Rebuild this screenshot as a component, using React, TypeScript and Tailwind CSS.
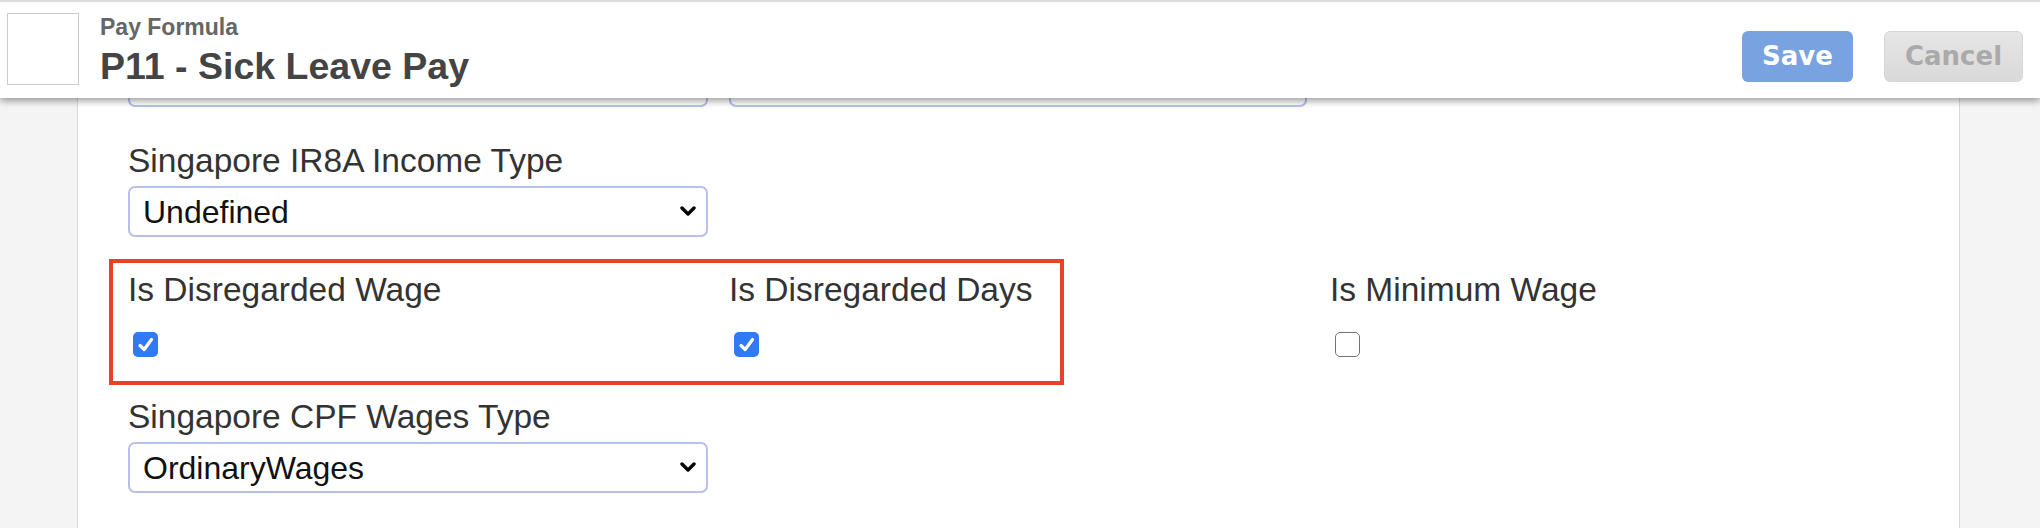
import React from "react";

function Chevron() {
  return (
    <svg width="16" height="11" viewBox="0 0 16 11" className="shrink-0">
      <polyline points="2,2 8,8 14,2" fill="none" stroke="#000" strokeWidth="3.4" strokeLinecap="round" strokeLinejoin="round" />
    </svg>
  );
}

function Select({ value, width = "w-[580px]" }: { value: string; width?: string }) {
  return (
    <div className={`${width} h-[51px] flex items-center justify-between pl-[13px] pr-[10px] border-2 border-[#b8bfec] rounded-[7px] bg-white text-[32px] leading-none text-[#111]`}>
      <span>{value}</span>
      <Chevron />
    </div>
  );
}

function Checkbox({ checked }: { checked: boolean }) {
  if (checked) {
    return (
      <span className="ml-[5px] w-[25px] h-[25px] rounded-[5px] bg-[#3179f5] flex items-center justify-center">
        <svg width="18" height="18" viewBox="0 0 18 18">
          <polyline points="3,9.5 7.2,13.5 14.5,3.5" fill="none" stroke="#fff" strokeWidth="3.2" strokeLinecap="round" strokeLinejoin="round" />
        </svg>
      </span>
    );
  }
  return <span className="ml-[5px] w-[25px] h-[25px] rounded-[5px] border-[1.5px] border-[#737373] bg-white block" />;
}

function Label({ children }: { children: React.ReactNode }) {
  return <div className="text-[33.5px] leading-[40px] text-[#333] whitespace-nowrap">{children}</div>;
}

export default function App() {
  return (
    <div className="relative h-[528px] w-full overflow-hidden flex bg-white font-['Liberation_Sans',Arial,sans-serif]">
      <aside className="w-[78px] shrink-0 bg-[#f4f4f4] border-r border-[#d9d9d9]" />
      <main className="flex-1 bg-white pl-[50px] pt-[56px]">
        <div className="grid grid-cols-[580px_580px_580px] gap-x-[21px]">
          <Select value="" />
          <Select value="" width="w-[578px]" />
        </div>

        <div className="mt-[34px]">
          <Label>Singapore IR8A Income Type</Label>
          <div className="mt-[5px]">
            <Select value="Undefined" />
          </div>
        </div>

        <div className="mt-[33px] grid grid-cols-[580px_580px_580px] gap-x-[21px]">
          <div>
            <Label>Is Disregarded Wage</Label>
            <div className="mt-[22px]">
              <Checkbox checked />
            </div>
          </div>
          <div>
            <Label>Is Disregarded Days</Label>
            <div className="mt-[22px]">
              <Checkbox checked />
            </div>
          </div>
          <div>
            <Label>Is Minimum Wage</Label>
            <div className="mt-[22px]">
              <Checkbox checked={false} />
            </div>
          </div>
        </div>

        <div className="mt-[40px]">
          <Label>Singapore CPF Wages Type</Label>
          <div className="mt-[5px]">
            <Select value="OrdinaryWages" />
          </div>
        </div>
      </main>
      <aside className="w-[81px] shrink-0 bg-[#f4f4f4] border-l border-[#d9d9d9]" />

      {/* annotation box */}
      <div className="absolute left-[109px] top-[259px] w-[955px] h-[126px] border-[4px] border-[#e9402b] pointer-events-none" />

      {/* sticky header */}
      <header className="absolute top-0 inset-x-0 h-[98px] bg-white border-t-2 border-[#dcdcdc] shadow-[0_3px_7px_rgba(0,0,0,0.38)] flex items-start pl-[7px] pt-[11px] pr-[17px]">
        <div className="w-[72px] h-[72px] border border-[#cccccc] bg-white shrink-0" />
        <div className="ml-[21px] mt-[1px] flex flex-col">
          <div className="text-[23px] leading-[26px] font-bold text-[#666]">Pay Formula</div>
          <div className="mt-[5px] text-[37.5px] leading-[42px] font-bold text-[#444]">P11 - Sick Leave Pay</div>
        </div>
        <div className="ml-auto mt-[18px] flex gap-[31px] font-['DejaVu_Sans',Verdana,sans-serif] font-bold text-[26px]">
          <button className="w-[111px] h-[51px] rounded-[6px] bg-[#79a3e0] text-white flex items-center justify-center">Save</button>
          <button className="w-[139px] h-[51px] rounded-[6px] border border-[#d6d6d6] bg-gradient-to-b from-[#e6e6e6] to-[#d9d9d9] text-[#aaaaaa] flex items-center justify-center">Cancel</button>
        </div>
      </header>
    </div>
  );
}
